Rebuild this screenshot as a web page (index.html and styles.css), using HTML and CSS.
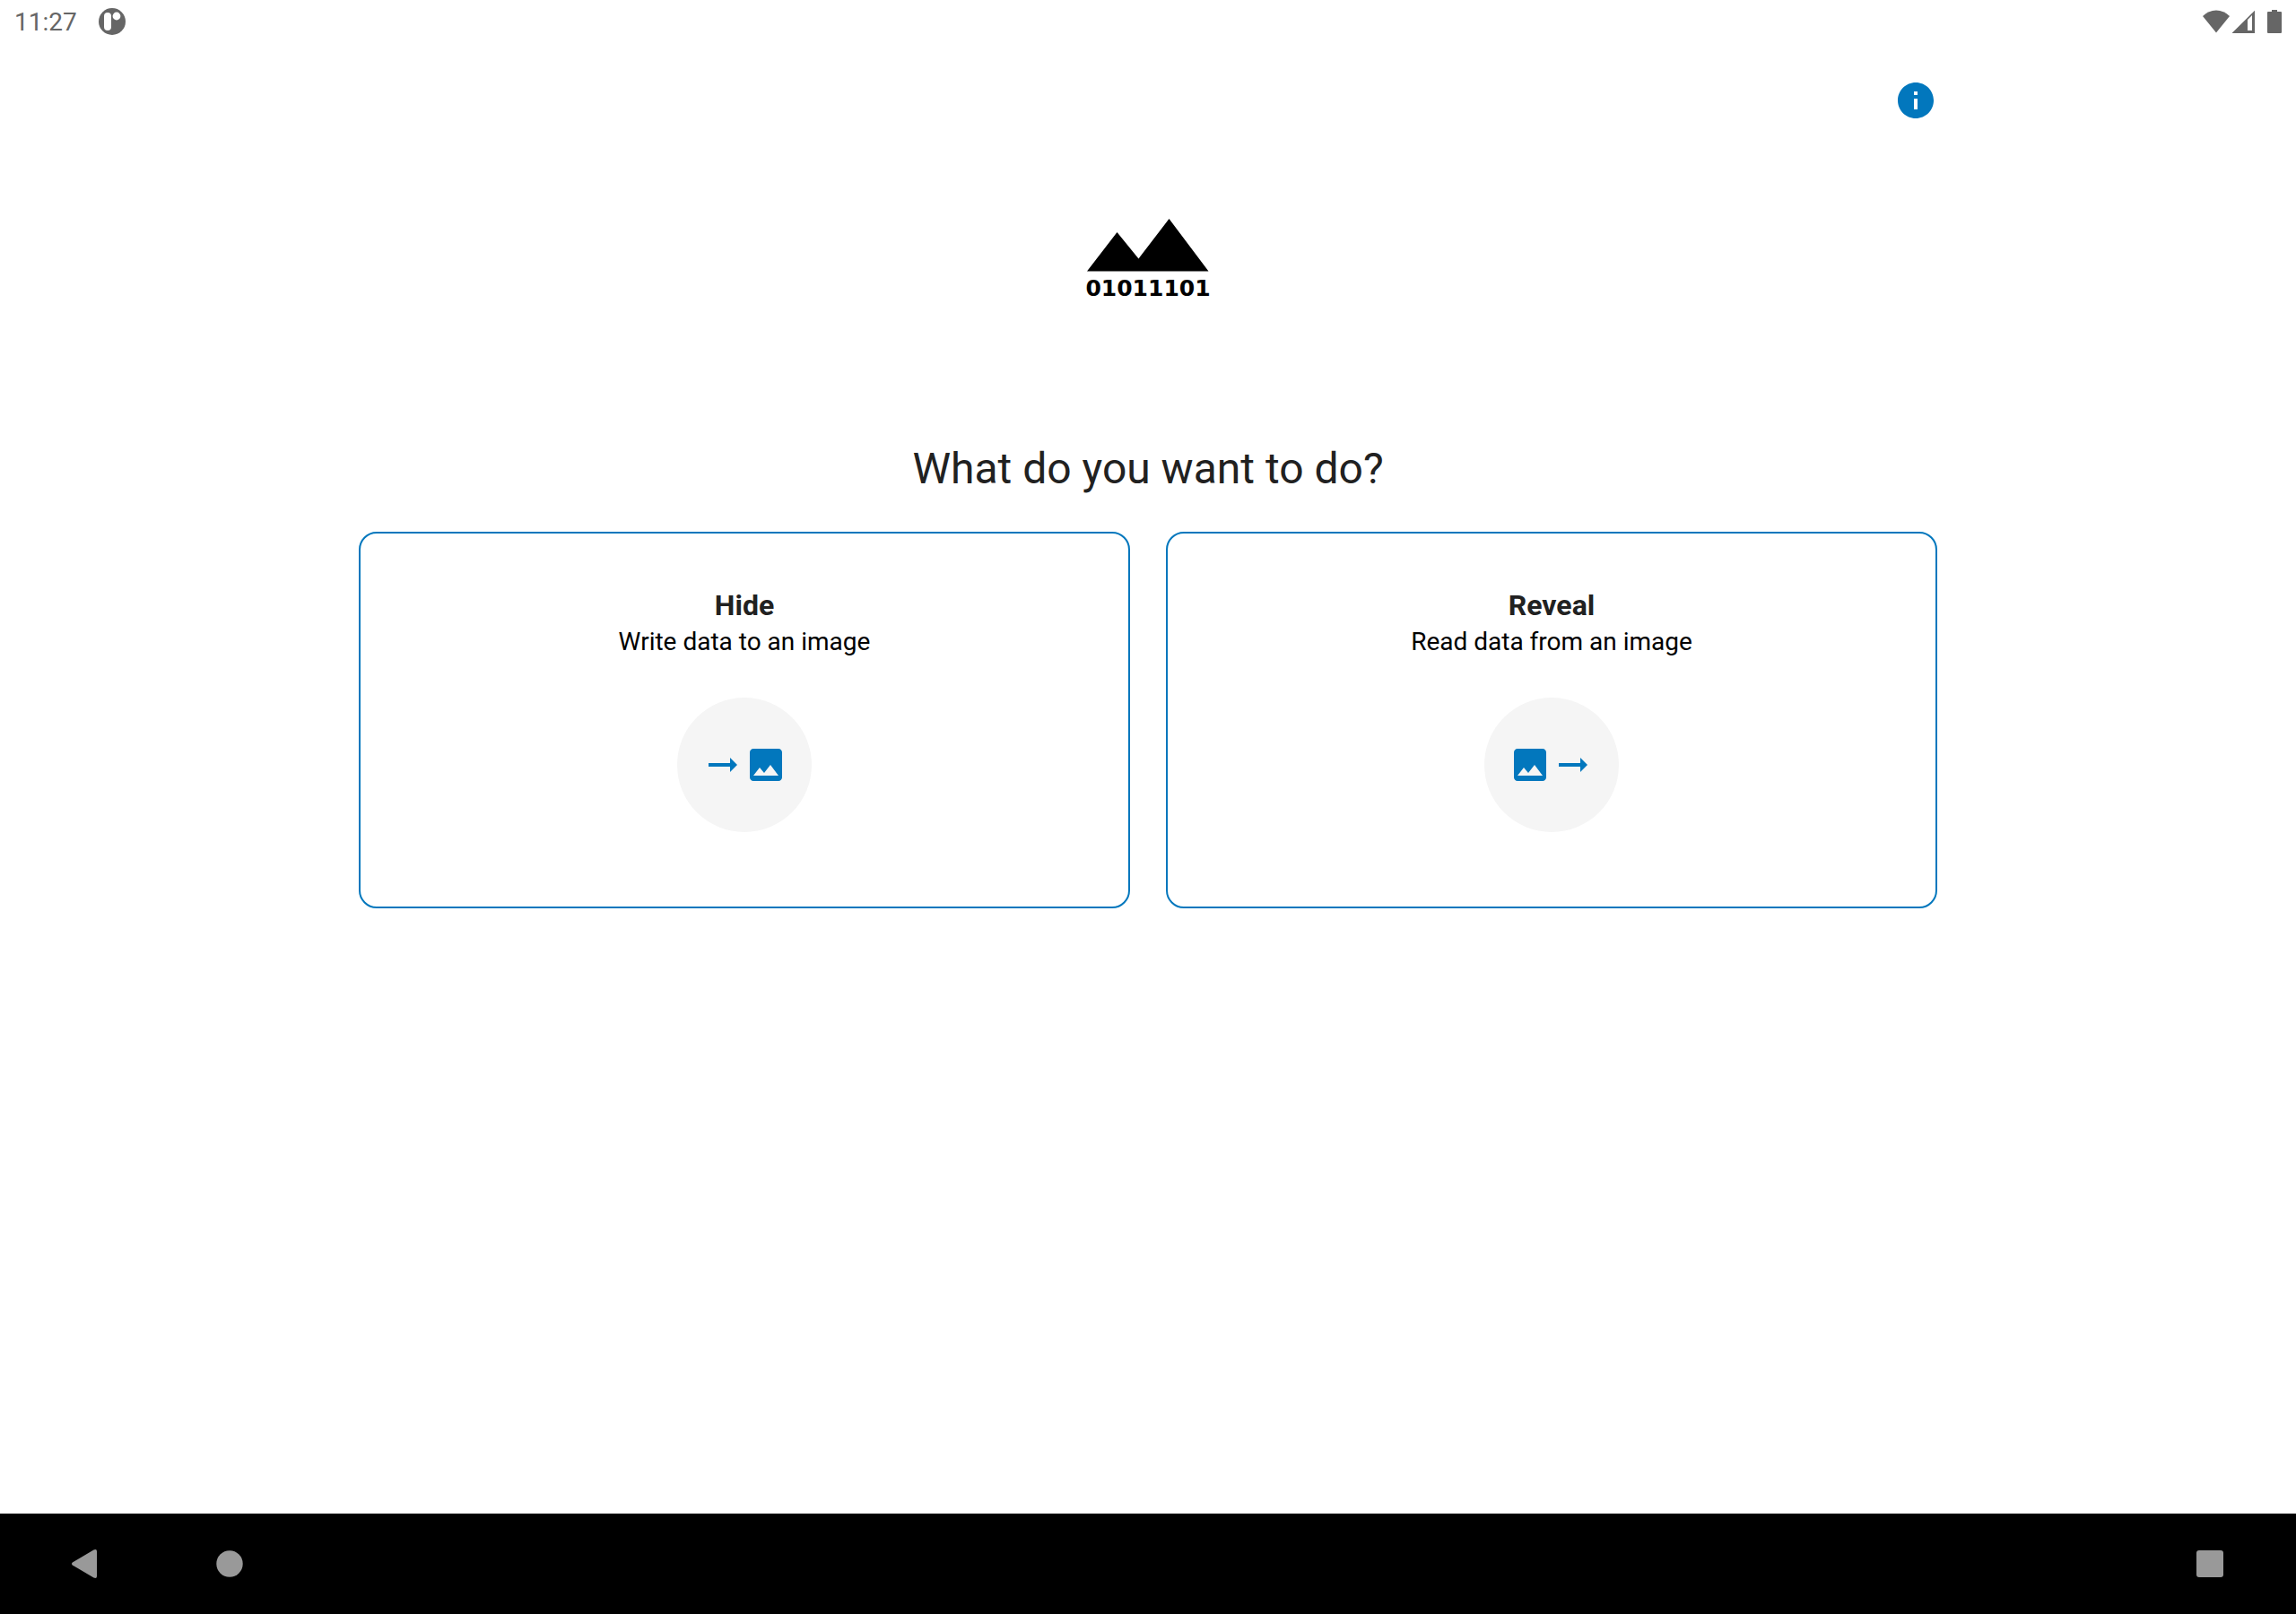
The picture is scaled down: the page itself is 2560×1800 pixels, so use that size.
FILE: index.html
```html
<!DOCTYPE html>
<html lang="en">
<head>
<meta charset="utf-8">
<meta name="viewport" content="width=device-width, initial-scale=1">
<title>Hide or reveal data</title>
<link rel="stylesheet" href="styles.css">
</head>
<body class="screen">
  <header class="status">
    <div class="status-group">
      <time class="clock">11:27</time>
      <svg class="app-mark" viewBox="0 0 30 30" aria-hidden="true">
        <circle cx="15" cy="15" r="15" fill="currentColor"/>
        <rect x="6" y="5" width="8" height="20" rx="4" fill="#fff"/>
        <circle cx="20" cy="9" r="4.4" fill="#fff"/>
      </svg>
    </div>
    <div class="status-group status-icons">
      <svg class="wifi" viewBox="0 0 30 26" aria-hidden="true"><path d="M15 25.5L0 7Q6.5 .5 15 .5T30 7z" fill="currentColor"/></svg>
      <svg class="signal" viewBox="0 0 26 26" aria-hidden="true"><path fill-rule="evenodd" d="M.5 26L26 .8V26zM18 11v12h5V6z" fill="currentColor"/></svg>
      <svg class="battery" viewBox="0 0 16 26" aria-hidden="true"><path d="M5 0h6v2h4q1 0 1 1v22q0 1-1 1H1q-1 0-1-1V3q0-1 1-1h4z" fill="currentColor"/></svg>
    </div>
  </header>

  <main class="content">
    <div class="toolbar">
      <button class="info" type="button" aria-label="About">
        <svg class="icon" viewBox="0 0 24 24" aria-hidden="true"><path fill="currentColor" d="M12 2C6.480 2 2 6.480 2 12s4.480 10 10 10 10-4.480 10-10S17.520 2 12 2zm1 15h-2v-6h2v6zm0-8h-2V7h2v2z"/></svg>
      </button>
    </div>

    <div class="logo">
      <svg class="peaks" viewBox="0 0 136 59" aria-hidden="true"><path d="M0 58.500L33.500 15 57.500 44.500 91.500 0 135.500 58.500z"/></svg>
      <span class="bits">01011101</span>
    </div>

    <h1 class="question">What do you want to do?</h1>

    <div class="choices">
      <button class="card" type="button">
        <span class="card-title">Hide</span>
        <span class="card-text">Write data to an image</span>
        <span class="badge">
          <svg class="icon" viewBox="0 0 24 24" aria-hidden="true"><path fill="currentColor" d="M16 11H4v2h12v3l4-4-4-4z"/></svg>
          <svg class="icon" viewBox="0 0 24 24" aria-hidden="true"><path fill="currentColor" d="M21 19V5c0-1.100-.9-2-2-2H5c-1.100 0-2 .9-2 2v14c0 1.100.9 2 2 2h14c1.100 0 2-.9 2-2zM8.500 13.500l2.500 3.010L14.500 12l4.500 6H5l3.500-4.500z"/></svg>
        </span>
      </button>
      <button class="card" type="button">
        <span class="card-title">Reveal</span>
        <span class="card-text">Read data from an image</span>
        <span class="badge">
          <svg class="icon" viewBox="0 0 24 24" aria-hidden="true"><path fill="currentColor" d="M21 19V5c0-1.100-.9-2-2-2H5c-1.100 0-2 .9-2 2v14c0 1.100.9 2 2 2h14c1.100 0 2-.9 2-2zM8.500 13.500l2.500 3.010L14.500 12l4.500 6H5l3.500-4.500z"/></svg>
          <svg class="icon" viewBox="0 0 24 24" aria-hidden="true"><path fill="currentColor" d="M16 11H4v2h12v3l4-4-4-4z"/></svg>
        </span>
      </button>
    </div>
  </main>

  <nav class="navbar" aria-label="System">
    <div class="nav-group">
      <button class="nav-button" type="button" aria-label="Back">
        <svg class="nav-icon" viewBox="0 0 32 32" aria-hidden="true"><path fill="currentColor" d="M.8 14.500L24.500 .4Q28 -.8 28 2v28q0 2.800-3.500 1.600L.8 17.500q-1.600-1.500 0-3z"/></svg>
      </button>
      <button class="nav-button" type="button" aria-label="Home">
        <svg class="nav-icon" viewBox="0 0 32 32" aria-hidden="true"><circle cx="16" cy="16" r="14.700" fill="currentColor"/></svg>
      </button>
    </div>
    <button class="nav-button" type="button" aria-label="Recent apps">
      <svg class="nav-icon" viewBox="0 0 32 32" aria-hidden="true"><rect x="1" y="1" width="30" height="30" rx="3" fill="currentColor"/></svg>
    </button>
  </nav>
</body>
</html>
```
FILE: styles.css
```css
* {
  box-sizing: border-box;
}

.screen {
  margin: 0;
  min-height: 100vh;
  display: flex;
  flex-direction: column;
  background: #fff;
  color: #212121;
  font-family: Roboto, "Liberation Sans", sans-serif;
}

button {
  margin: 0;
  padding: 0;
  border: 0;
  background: none;
  color: inherit;
  font: inherit;
  cursor: pointer;
}

svg {
  display: block;
  flex: none;
}

/* Status bar */
.status {
  display: flex;
  justify-content: space-between;
  align-items: center;
  height: 48px;
  padding: 0 16px;
  color: #666;
}

.status-group {
  display: flex;
  align-items: center;
  gap: 24px;
}

.status-icons {
  gap: 0;
}

.clock {
  padding-top: 2px;
  font-size: 28px;
  line-height: 32px;
}

.app-mark {
  width: 30px;
  height: 30px;
}

.wifi {
  width: 30px;
  height: 26px;
  margin-right: 2px;
}

.signal {
  width: 26px;
  height: 26px;
  margin-right: 14px;
}

.battery {
  width: 16px;
  height: 26px;
}

/* Main content */
.content {
  flex: 1;
  width: 100%;
  max-width: 1840px;
  margin: 0 auto;
  padding: 40px;
}

.icon {
  width: 48px;
  height: 48px;
}

.toolbar {
  display: flex;
  justify-content: flex-end;
}

.info {
  color: #0277bd;
}

.logo {
  display: flex;
  flex-direction: column;
  align-items: center;
  margin-top: 108px;
  color: #000;
}

.peaks {
  width: 136px;
  height: 59px;
}

.bits {
  margin-top: 3px;
  font-family: "DejaVu Sans", sans-serif;
  font-size: 25px;
  font-weight: 700;
  line-height: 32px;
}

.question {
  margin: 153px 0 0;
  font-size: 48px;
  font-weight: 400;
  line-height: 64px;
  text-align: center;
}

.choices {
  display: grid;
  grid-template-columns: repeat(auto-fit, minmax(400px, 1fr));
  gap: 40px;
  margin-top: 38px;
}

.card {
  display: flex;
  flex-direction: column;
  align-items: center;
  padding: 60px 40px 83px;
  border: 2px solid #0277bd;
  border-radius: 20px;
}

.card-title {
  font-size: 32px;
  font-weight: 700;
  line-height: 40px;
}

.card-text {
  margin-top: 1px;
  color: #000;
  font-size: 28px;
  line-height: 40px;
}

.badge {
  display: flex;
  align-items: center;
  justify-content: center;
  width: 150px;
  height: 150px;
  margin-top: 42px;
  border-radius: 50%;
  background: #f5f5f5;
  color: #0277bd;
}

/* Navigation bar */
.navbar {
  display: flex;
  justify-content: space-between;
  align-items: center;
  height: 112px;
  padding: 0 16px;
  background: #000;
  color: #999;
}

.nav-group {
  display: flex;
}

.nav-button {
  display: grid;
  place-items: center;
  width: 160px;
  height: 112px;
}

.nav-icon {
  width: 32px;
  height: 32px;
}
```
